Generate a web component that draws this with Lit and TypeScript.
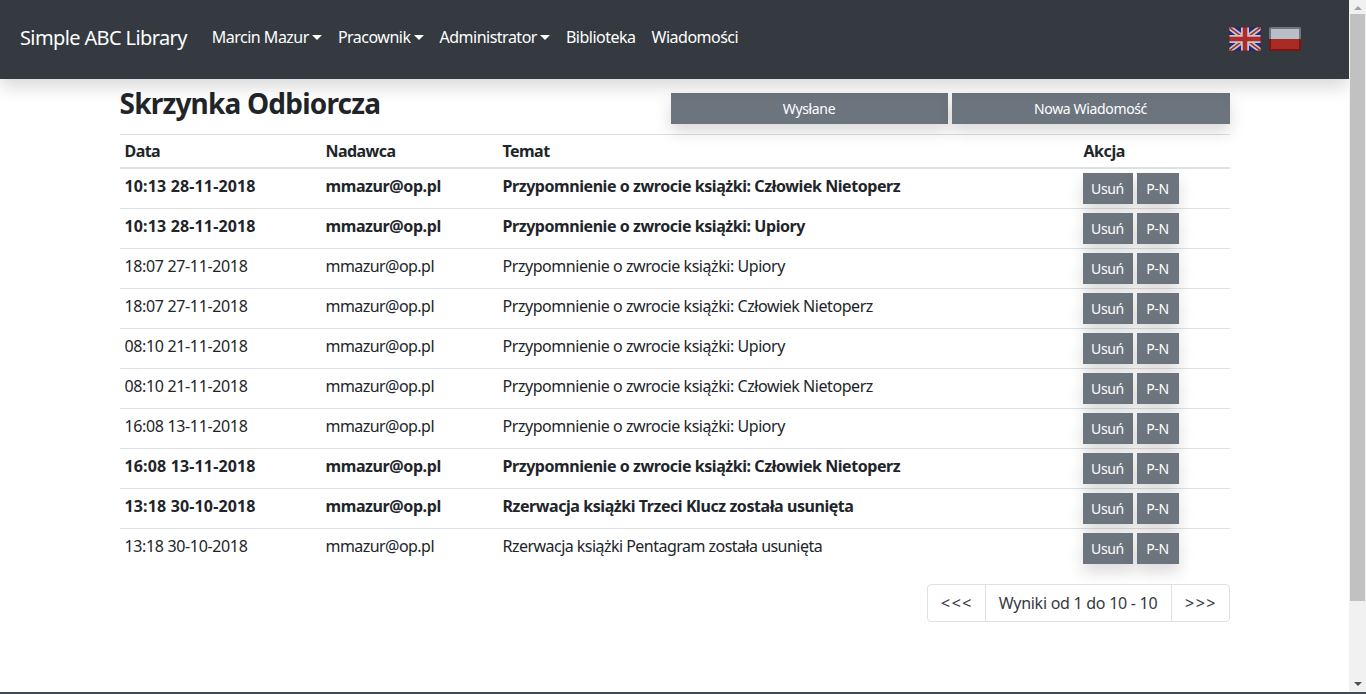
import { LitElement, html, css } from "lit";
import { customElement } from "lit/decorators.js";

interface Row { d: string; s: string; b: boolean; t?: boolean }
const rows: Row[] = [
  { d: "10:13 28-11-2018", s: "Przypomnienie o zwrocie książki: Człowiek Nietoperz", b: true },
  { d: "10:13 28-11-2018", s: "Przypomnienie o zwrocie książki: Upiory", b: true },
  { d: "18:07 27-11-2018", s: "Przypomnienie o zwrocie książki: Upiory", b: false },
  { d: "18:07 27-11-2018", s: "Przypomnienie o zwrocie książki: Człowiek Nietoperz", b: false },
  { d: "08:10 21-11-2018", s: "Przypomnienie o zwrocie książki: Upiory", b: false },
  { d: "08:10 21-11-2018", s: "Przypomnienie o zwrocie książki: Człowiek Nietoperz", b: false },
  { d: "16:08 13-11-2018", s: "Przypomnienie o zwrocie książki: Upiory", b: false },
  { d: "16:08 13-11-2018", s: "Przypomnienie o zwrocie książki: Człowiek Nietoperz", b: true },
  { d: "13:18 30-10-2018", s: "Rzerwacja książki Trzeci Klucz została usunięta", b: true },
  { d: "13:18 30-10-2018", s: "Rzerwacja książki Pentagram została usunięta", b: false, t: true },
];

@customElement("app-root")
export class AppRoot extends LitElement {
  static styles = css`
    :host { display: block; height: 694px; overflow: hidden; position: relative; background: #fff;
      font-family: "Noto Sans", "Open Sans", sans-serif; color: #212529; font-size: 16px; letter-spacing: -0.45px; }
    * { box-sizing: border-box; }
    .shell { display: flex; height: 692px; }
    .page { flex: 1; min-width: 0; }
    .nav { height: 79px; background: #343a40; display: flex; align-items: flex-start; padding: 0 48px 0 20px; color: #fff;
      box-shadow: 0 8px 16px rgba(0,0,0,.15); position: relative; }
    .brand { font-size: 20px; line-height: 30px; margin: 23px 25px 0 0; letter-spacing: -0.62px; }
    .link { line-height: 24px; margin: 25px 16px 0 0; display: flex; align-items: center; letter-spacing: -0.5px; }
    .caret { width: 0; height: 0; border-top: 5px solid #fff; border-left: 5px solid transparent; border-right: 5px solid transparent; margin-left: 3px; }
    .flags { margin-left: auto; margin-top: 27px; display: flex; gap: 8px; }
    .flag { display: block; width: 32px; height: 24px; }
    .container { width: 1110px; margin: 0 auto; }
    .head { display: flex; height: 55px; align-items: flex-start; }
    h1 { font-size: 28px; line-height: 34px; font-weight: 700; margin: 7px 0 0; flex: 1; letter-spacing: -0.8px; }
    .top-btns { display: flex; gap: 4px; margin-top: 14px; }
    .btn { background: #6c757d; color: #fff; font-size: 14px; line-height: 21px; font-weight: 400; letter-spacing: -0.35px;
      text-align: center; box-shadow: 0 8px 16px rgba(0,0,0,.15); display: block; }
    .top-btns .btn { padding: 5px 0; height: 31px; width: 277px; }
    .top-btns .btn.wide { width: 278px; }
    table { border-collapse: collapse; table-layout: fixed; width: 1110px; }
    th, td { padding: 0 5px; text-align: left; border-top: 1px solid #dee2e6; white-space: nowrap; }
    th { height: 33px; font-weight: 700; border-bottom: 2px solid #dee2e6; letter-spacing: -0.55px; vertical-align: middle; }
    th.ak { padding-left: 6px; letter-spacing: -0.45px; }
    td { height: 40px; line-height: 24px; padding-top: 5px; vertical-align: top; }
    tr.b td { font-weight: 700; }
    tr:first-child td { border-top: 0; }
    .date { letter-spacing: -0.35px; }
    tr.b .date { letter-spacing: 0.15px; }
    .mail { letter-spacing: -0.55px; }
    tr.b .mail { letter-spacing: -0.4px; }
    .subj { letter-spacing: -0.44px; }
    .subj.tight { letter-spacing: -0.53px; }
    .acts { display: flex; gap: 4px; height: 35px; margin-top: -1px; }
    .acts .btn { height: 31px; padding: 5px 0; }
    .del { width: 50px; }
    .pn { width: 42px; }
    .pager-row { display: flex; justify-content: flex-end; margin-top: 16px; }
    .pager { display: flex; height: 38px; border: 1px solid #dee2e6; border-radius: 4px; line-height: 36px; color: #343a40; letter-spacing: -0.27px; }
    .pager span { text-align: center; display: block; }
    .pager span + span { border-left: 1px solid #dee2e6; }
    .edge { width: 57px; letter-spacing: 1.5px; padding-left: 2px; }
    .pager span.last { width: 58px; }
    .mid { width: 186px; }
    .scroll { width: 17px; background: #f1f1f1; position: relative; display: flex; flex-direction: column; align-items: center; }
    .arrow-u { width: 0; height: 0; border-bottom: 4px solid #a3a3a3; border-left: 4px solid transparent; border-right: 4px solid transparent; margin-top: 6px; }
    .thumb { width: 15px; height: 587px; background: #c1c1c1; margin-top: 4px; }
    .arrow-d { width: 0; height: 0; border-top: 4px solid #505050; border-left: 4px solid transparent; border-right: 4px solid transparent; margin-top: auto; margin-bottom: 6px; }
    .strip { height: 2px; background: #3c4a5c; }
  `;

  render() {
    return html`
      <div class="shell">
        <div class="page">
          <nav class="nav">
            <div class="brand">Simple ABC Library</div>
            <div class="link">Marcin Mazur<i class="caret"></i></div>
            <div class="link">Pracownik<i class="caret"></i></div>
            <div class="link">Administrator<i class="caret"></i></div>
            <div class="link">Biblioteka</div>
            <div class="link">Wiadomości</div>
            <div class="flags">
              <svg class="flag" viewBox="0 0 32 24">
                <defs><clipPath id="r"><rect width="32" height="24" rx="2"/></clipPath></defs>
                <g clip-path="url(#r)">
                  <rect width="32" height="24" fill="#1f2a84"/>
                  <path d="M0 0L32 24M32 0L0 24" stroke="#c3c7cc" stroke-width="5"/>
                  <path d="M0 0L32 24M32 0L0 24" stroke="#b02a2a" stroke-width="1.6"/>
                  <path d="M16 0V24M0 12H32" stroke="#c3c7cc" stroke-width="8"/>
                  <path d="M16 0V24M0 12H32" stroke="#b02a2a" stroke-width="4.5"/>
                  <rect x=".5" y=".5" width="31" height="23" rx="2" fill="none" stroke="#7a1010" stroke-opacity=".45"/>
                </g>
              </svg>
              <svg class="flag" viewBox="0 0 32 24">
                <defs><clipPath id="p"><rect width="32" height="24" rx="2"/></clipPath></defs>
                <g clip-path="url(#p)">
                  <rect width="32" height="12" fill="#6e7780"/>
                  <rect y="12" width="32" height="12" fill="#7c1410"/>
                  <rect x="2" y="2" width="28" height="10" fill="#b9bfc6"/>
                  <rect x="2" y="12" width="28" height="10" fill="#a92b26"/>
                </g>
              </svg>
            </div>
          </nav>
          <div class="container">
            <div class="head">
              <h1>Skrzynka Odbiorcza</h1>
              <div class="top-btns">
                <span class="btn">Wysłane</span>
                <span class="btn wide">Nowa Wiadomość</span>
              </div>
            </div>
            <table>
              <colgroup><col style="width:201px"/><col style="width:177px"/><col style="width:580px"/><col style="width:152px"/></colgroup>
              <thead><tr><th>Data</th><th>Nadawca</th><th>Temat</th><th class="ak">Akcja</th></tr></thead>
              <tbody>
                ${rows.map(r => html`<tr class=${r.b ? "b" : ""}>
                  <td class="date">${r.d}</td><td class="mail">mmazur@op.pl</td><td class="subj ${r.t ? "tight" : ""}">${r.s}</td>
                  <td><div class="acts"><span class="btn del">Usuń</span><span class="btn pn">P-N</span></div></td>
                </tr>`)}
              </tbody>
            </table>
            <div class="pager-row">
              <div class="pager"><span class="edge">&lt;&lt;&lt;</span><span class="mid">Wyniki od 1 do 10 - 10</span><span class="edge last">&gt;&gt;&gt;</span></div>
            </div>
          </div>
        </div>
        <div class="scroll"><i class="arrow-u"></i><div class="thumb"></div><i class="arrow-d"></i></div>
      </div>
      <div class="strip"></div>
    `;
  }
}
